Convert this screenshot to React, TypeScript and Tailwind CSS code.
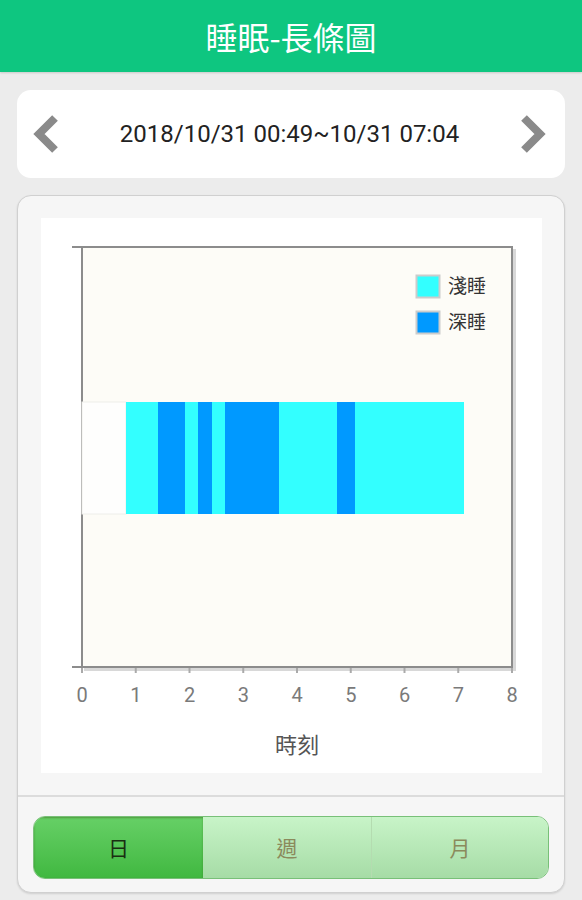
import React from "react";

const segs: [number, number, string][] = [
  [85, 117, "#33ffff"],
  [117, 144, "#0099ff"],
  [144, 157, "#33ffff"],
  [157, 171, "#0099ff"],
  [171, 184, "#33ffff"],
  [184, 238, "#0099ff"],
  [238, 296, "#33ffff"],
  [296, 314, "#0099ff"],
  [314, 423, "#33ffff"],
];

function Chart() {
  const ticks = [0, 1, 2, 3, 4, 5, 6, 7, 8];
  return (
    <svg width="501" height="555" viewBox="0 0 501 555">
      <rect x="43" y="31" width="432" height="422" fill="#d8d8d8" />
      <rect x="41" y="29" width="430" height="420" fill="#fdfcf7" stroke="#8c8c8c" strokeWidth="2" />
      <rect x="41" y="184" width="44" height="112" fill="#fefefd" stroke="#eeeeea" strokeWidth="1" />
      {segs.map(([a, b, c], i) => (
        <rect key={i} x={a} y={184} width={b - a} height={112} fill={c} />
      ))}
      <line x1="31" y1="29" x2="41" y2="29" stroke="#8c8c8c" strokeWidth="2" />
      <line x1="31" y1="449" x2="41" y2="449" stroke="#8c8c8c" strokeWidth="2" />
      {ticks.map((t) => (
        <line key={t} x1={41 + t * 53.75} y1={450} x2={41 + t * 53.75} y2={455} stroke="#aaaaaa" strokeWidth="2" />
      ))}
      {ticks.map((t) => (
        <text
          key={"l" + t}
          x={41 + t * 53.75}
          y={484}
          textAnchor="middle"
          fontSize="20"
          fill="#7a7a7a"
          className="font-['Roboto',sans-serif]"
        >
          {t}
        </text>
      ))}
      <text x="256" y="535" textAnchor="middle" fontSize="22" fill="#555555" className="font-['Noto_Sans_CJK_TC',sans-serif]">
        時刻
      </text>
      <rect x="375.5" y="57.5" width="23" height="22" fill="#33ffff" stroke="#cccccc" strokeWidth="2" />
      <rect x="375.5" y="93.5" width="23" height="22" fill="#0099ff" stroke="#cccccc" strokeWidth="2" />
      <text x="407" y="75" fontSize="19" fill="#333333" className="font-['Noto_Sans_CJK_TC',sans-serif]">
        淺睡
      </text>
      <text x="407" y="111" fontSize="19" fill="#333333" className="font-['Noto_Sans_CJK_TC',sans-serif]">
        深睡
      </text>
    </svg>
  );
}

function Chevron({ dir }: { dir: "l" | "r" }) {
  return (
    <svg width="30" height="40" viewBox="0 0 30 40">
      {dir === "l" ? (
        <polyline points="24,4 8,20 24,36" fill="none" stroke="#8a8a8a" strokeWidth="8" strokeLinejoin="miter" />
      ) : (
        <polyline points="6,4 22,20 6,36" fill="none" stroke="#8a8a8a" strokeWidth="8" strokeLinejoin="miter" />
      )}
    </svg>
  );
}

export default function App() {
  return (
    <div className="w-[582px] h-[900px] bg-[#ececec] overflow-hidden flex flex-col">
      <div className="h-[72px] bg-[#0ec680] flex items-center justify-center text-white text-[32px] font-['Noto_Sans_CJK_TC',sans-serif] shadow-[0_1px_2px_rgba(0,0,0,0.15)]">
        睡眠-長條圖
      </div>
      <div className="px-[17px] pt-[18px] flex flex-col">
        <div className="h-[88px] bg-white rounded-[14px] flex items-center justify-between pl-[14px] pr-[17px]">
          <Chevron dir="l" />
          <span className="text-[24px] text-[#222] font-['Roboto',sans-serif]">
            2018/10/31 00:49~10/31 07:04
          </span>
          <Chevron dir="r" />
        </div>
        <div className="mt-[17px] h-[698px] bg-[#f6f6f6] border border-[#d0d0d0] rounded-[14px] flex flex-col shadow-[0_1px_2px_rgba(0,0,0,0.12)]">
          <div className="pt-[22px] px-[23px] h-[599px]">
            <div className="bg-white w-[501px] h-[555px]">
              <Chart />
            </div>
          </div>
          <div className="border-t-2 border-[#dcdcdc] flex-1 px-[15px] pt-[19px]">
            <div className="h-[63px] rounded-[12px] border border-[#78c078] flex overflow-hidden text-[21px] font-['Noto_Sans_CJK_TC',sans-serif]">
              <div className="w-[169px] bg-gradient-to-b from-[#66d066] to-[#40b840] flex items-center justify-center text-[#1a2e12] shadow-[inset_0_1px_2px_rgba(60,100,20,0.5)]">
                日
              </div>
              <div className="w-[169px] bg-gradient-to-b from-[#c8f4c8] to-[#a6dca6] flex items-center justify-center text-[#8b8a5c] border-r border-[#b4dcb0]">
                週
              </div>
              <div className="flex-1 bg-gradient-to-b from-[#c8f4c8] to-[#a6dca6] flex items-center justify-center text-[#8b8a5c]">
                月
              </div>
            </div>
          </div>
        </div>
      </div>
    </div>
  );
}
